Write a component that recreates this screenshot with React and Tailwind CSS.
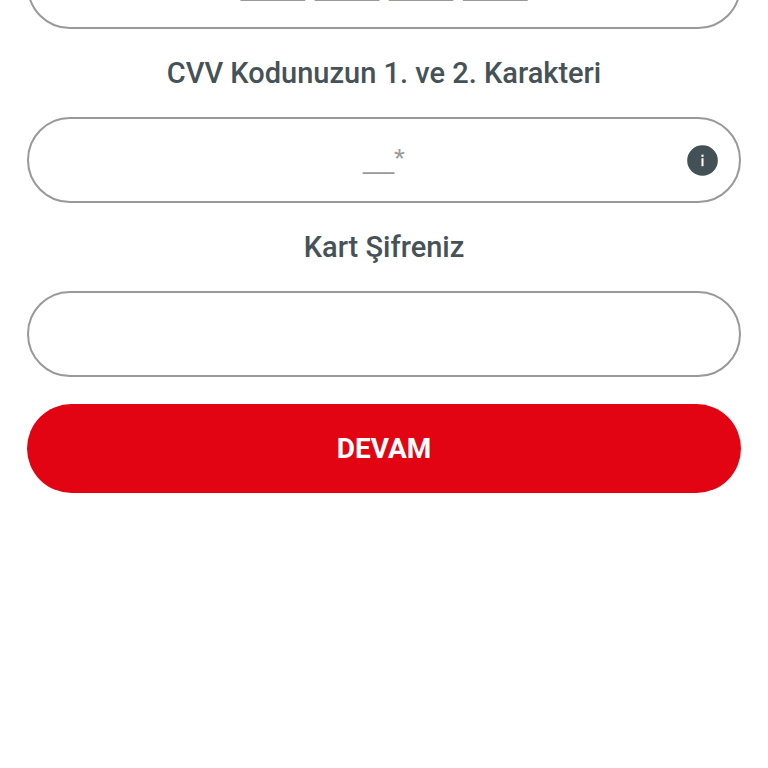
import { useState } from "react";

const fieldClass =
    "block w-full h-[86px] rounded-full border-2 border-[#999999] bg-white px-16 text-center text-[#4a5357] placeholder:text-[#999999] placeholder:opacity-100 outline-none";

const labelClass = "block py-6 text-center text-[29px] leading-10 font-medium text-[#465257]";

function InfoIcon() {
    return (
        <svg viewBox="0 0 31 31" className="size-[31px]" aria-hidden="true">
            <circle cx="15.5" cy="15.5" r="15.3" fill="#435055" />
            <rect x="14.4" y="9.6" width="2.2" height="2.2" fill="#ffffff" />
            <rect x="14.5" y="13.2" width="2" height="8" fill="#ffffff" />
        </svg>
    );
}

export default function App() {
    const [cardNumber, setCardNumber] = useState("");
    const [cvv, setCvv] = useState("");
    const [password, setPassword] = useState("");

    return (
        <main className="overflow-hidden bg-white font-['Roboto',sans-serif]">
            {/* The form is scrolled so the card number field is partly off the top */}
            <form className="-mt-[57px] px-[27px] pb-10" onSubmit={(e) => e.preventDefault()}>
                <input
                    type="text"
                    inputMode="numeric"
                    aria-label="Kart Numaranız"
                    placeholder="____ ____ ____ ____"
                    value={cardNumber}
                    onChange={(e) => setCardNumber(e.target.value)}
                    className={`${fieldClass} pb-2 font-['DejaVu_Sans',sans-serif] text-[32px]`}
                />

                <label htmlFor="cvv" className={labelClass}>
                    CVV Kodunuzun 1. ve 2. Karakteri
                </label>
                <div className="relative">
                    <input
                        id="cvv"
                        type="text"
                        inputMode="numeric"
                        placeholder="__*"
                        value={cvv}
                        onChange={(e) => setCvv(e.target.value)}
                        className={`${fieldClass} pb-0.5 font-['Liberation_Sans',sans-serif] text-[28px]`}
                    />
                    <button
                        type="button"
                        aria-label="Bilgi"
                        className="absolute inset-y-0 right-[23px] flex items-center"
                    >
                        <InfoIcon />
                    </button>
                </div>

                <label htmlFor="password" className={labelClass}>
                    Kart Şifreniz
                </label>
                <input
                    id="password"
                    type="password"
                    value={password}
                    onChange={(e) => setPassword(e.target.value)}
                    className={`${fieldClass} text-[28px]`}
                />

                <button
                    type="submit"
                    className="mt-[27px] block h-[89px] w-full rounded-full bg-[#e20413] text-center text-[28px] font-bold text-white"
                >
                    DEVAM
                </button>
            </form>
        </main>
    );
}
